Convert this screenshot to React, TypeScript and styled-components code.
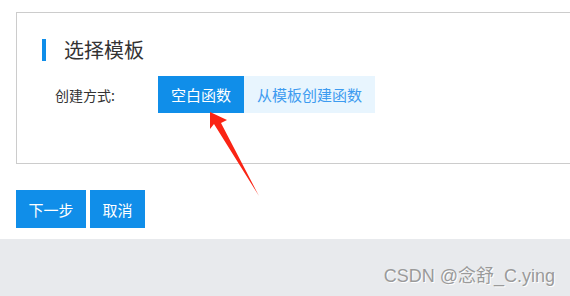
import styled, { createGlobalStyle } from "styled-components"

const Global = createGlobalStyle`
  html, body { margin: 0; padding: 0; background: #fff; }
  body {
    width: 570px;
    height: 296px;
    overflow: hidden;
    font-family: "Noto Sans CJK SC", "Noto Sans", sans-serif;
  }
`

const Page = styled.div`
  position: relative;
  display: flex;
  flex-direction: column;
  height: 296px;
`

const Main = styled.div`
  padding: 12px 0 0 16px;
  height: 227px;
`

const Card = styled.section`
  box-sizing: border-box;
  height: 152px;
  border: 1px solid #cccccc;
  border-right: none;
  padding: 26px 0 0 25px;
`

const TitleRow = styled.div`
  display: flex;
  align-items: center;
  gap: 18px;
  height: 22px;
`

const Bar = styled.span`
  width: 4px;
  height: 22px;
  background: #108ee9;
`

const Title = styled.h2`
  margin: 0;
  font-size: 20px;
  font-weight: 400;
  color: #333;
  line-height: 22px;
`

const FormRow = styled.div`
  display: flex;
  align-items: center;
  margin-top: 15px;
  padding-left: 13px;
`

const Label = styled.span`
  width: 103px;
  font-size: 14px;
  color: #333;
`

const Tab = styled.button<{ $active?: boolean }>`
  height: 37px;
  border: none;
  padding: 0 13px;
  font-family: inherit;
  font-size: 15px;
  background: ${(p) => (p.$active ? "#108ee9" : "#e8f5fe")};
  color: ${(p) => (p.$active ? "#fff" : "#3d9bf0")};
`

const Actions = styled.div`
  display: flex;
  gap: 4px;
  margin-top: 26px;
`

const Btn = styled.button<{ $w: number }>`
  width: ${(p) => p.$w}px;
  height: 38px;
  border: none;
  background: #108ee9;
  color: #fff;
  font-family: inherit;
  font-size: 15px;
  padding: 0;
`

const Footer = styled.footer`
  flex: 1;
  background: #e8eaed;
  display: flex;
  justify-content: flex-end;
  align-items: flex-end;
  padding: 0 15px 9px 0;
`

const Mark = styled.span`
  font-family: "Liberation Sans", "Noto Sans CJK SC", sans-serif;
  font-size: 18px;
  color: #9a9a9a;
  text-shadow: 1px 1px 0 #fff;
`

const Arrow = styled.svg`
  position: absolute;
  left: 0;
  top: 0;
  pointer-events: none;
`

export default function App() {
  return (
    <Page>
      <Global />
      <Main>
        <Card>
          <TitleRow>
            <Bar />
            <Title>选择模板</Title>
          </TitleRow>
          <FormRow>
            <Label>创建方式:</Label>
            <Tab $active>空白函数</Tab>
            <Tab>从模板创建函数</Tab>
          </FormRow>
        </Card>
        <Actions>
          <Btn $w={70}>下一步</Btn>
          <Btn $w={55}>取消</Btn>
        </Actions>
      </Main>
      <Footer>
        <Mark>CSDN @念舒_C.ying</Mark>
      </Footer>
      <Arrow width="570" height="296" viewBox="0 0 570 296">
        <polygon points="210,112 227,120 221,123 259,196 214,124 210,129" fill="#fa2414" />
      </Arrow>
    </Page>
  )
}
